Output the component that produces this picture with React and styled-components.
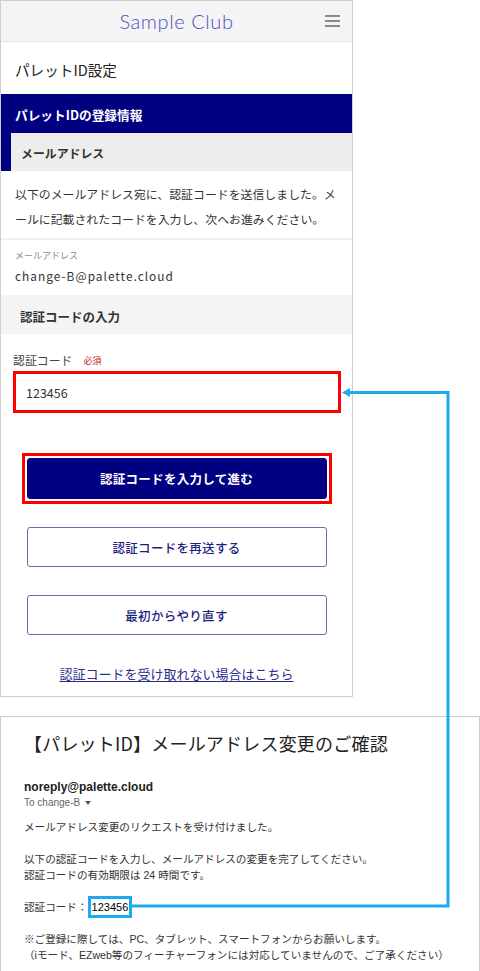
import React from 'react'
import styled, { createGlobalStyle } from 'styled-components'

const GlobalStyle = createGlobalStyle`
  html, body {
    margin: 0;
    padding: 0;
    background: #fff;
  }
  body {
    font-family: "Noto Sans CJK JP", "Noto Sans", sans-serif;
    color: #333;
  }
  * {
    box-sizing: border-box;
  }
`

const Page = styled.div`
  position: relative;
  width: 480px;
  height: 971px;
  overflow: hidden;
  display: flex;
  flex-direction: column;
  gap: 19px;
`

/* ---------- phone screen ---------- */

const Phone = styled.div`
  width: 353px;
  border: 1px solid #cfcfcf;
  display: flex;
  flex-direction: column;
`

const Header = styled.header`
  height: 41px;
  background: #f4f4f4;
  border-bottom: 1px solid #e6e6e6;
  display: grid;
  grid-template-columns: 1fr auto 1fr;
  align-items: center;
`

const Logo = styled.div`
  grid-column: 2;
  font-family: Lato, "Liberation Sans", sans-serif;
  font-weight: 300;
  font-size: 20px;
  letter-spacing: 0.6px;
  color: #4d4dbf;
`

const Burger = styled.div`
  justify-self: end;
  margin-right: 12px;
  width: 15px;
  display: flex;
  flex-direction: column;
  gap: 3.4px;

  span {
    display: block;
    height: 1.6px;
    background: #8a8a8a;
  }
`

const PageTitle = styled.h1`
  margin: 0;
  height: 52px;
  padding: 3px 14px 0;
  display: flex;
  align-items: center;
  font-size: 14.6px;
  font-weight: 400;
  color: #222;
`

const NavyBar = styled.h2`
  margin: 0;
  height: 39px;
  padding: 2px 14px 0;
  display: flex;
  align-items: center;
  background: #000080;
  color: #fff;
  font-size: 12.7px;
  font-weight: 700;
`

const SubHead = styled.h3`
  margin: 0;
  height: ${p => (p.$accent ? '38px' : '39px')};
  padding: ${p => (p.$accent ? '0 10px' : '3px 19px 0')};
  display: flex;
  align-items: center;
  background: ${p => (p.$accent ? '#ededed' : '#f4f4f4')};
  border-left: ${p => (p.$accent ? '10px solid #000080' : 'none')};
  font-size: ${p => (p.$accent ? '11.9px' : '12.5px')};
  font-weight: 700;
  color: #333;
`

const Lead = styled.p`
  margin: 0;
  padding: 10px 12px 7px 14px;
  font-size: 11.9px;
  line-height: 25px;
  color: #333;
`

const InfoBlock = styled.div`
  border-top: 2px solid #f0f0f0;
  padding: 9px 14px 9px;
  display: flex;
  flex-direction: column;
  gap: 3px;
`

const InfoLabel = styled.div`
  font-size: 9px;
  line-height: 14px;
  color: #8a8a8a;
`

const InfoValue = styled.div`
  font-size: 11.9px;
  line-height: 20px;
  letter-spacing: 1px;
  color: #333;
`

const FormBlock = styled.div`
  padding: 16px 12px 0;
`

const FieldLabel = styled.div`
  display: flex;
  align-items: center;
  gap: 11px;
  font-size: 11.9px;
  line-height: 18px;
  color: #444;
`

const Required = styled.span`
  font-size: 9px;
  color: #c0282d;
  padding-top: 2px;
`

const InputBox = styled.div`
  margin-top: 1px;
  width: 328px;
  height: 42px;
  border: 3px solid #ff0000;
  background: #fff;
  padding: 0 10px;
  display: flex;
  align-items: center;
  font-size: 12.5px;
  color: #333;
`

const Actions = styled.div`
  padding: 40px 0 13px;
  display: flex;
  flex-direction: column;
  align-items: center;
`

const Highlight = styled.div`
  border: 3px solid #ff0000;
  padding: 2px;
  margin-bottom: 23px;
`

const Button = styled.div`
  width: 300px;
  height: ${p => (p.$primary ? '41px' : '40px')};
  margin-bottom: ${p => (p.$primary ? '0' : '28px')};
  border-radius: 3px;
  display: flex;
  align-items: center;
  justify-content: center;
  font-size: 12.5px;
  letter-spacing: 0.3px;
  font-weight: ${p => (p.$primary ? 700 : 500)};
  background: ${p => (p.$primary ? '#000080' : '#fff')};
  color: ${p => (p.$primary ? '#fff' : '#1e1e80')};
  border: 1px solid ${p => (p.$primary ? '#000080' : '#6d6da6')};
`

const HelpLink = styled.a`
  margin-top: 2px;
  font-size: 13px;
  line-height: 18px;
  color: #2b2b8a;
  text-decoration: underline;
  text-underline-offset: 2px;
`

/* ---------- mail preview ---------- */

const Mail = styled.div`
  flex: 1;
  width: 480px;
  border: 1px solid #cccccc;
  border-bottom: none;
  padding: 13px 8px 0 23px;
  font-family: "Liberation Sans", "Noto Sans CJK JP", sans-serif;
  white-space: nowrap;
`

const MailSubject = styled.div`
  font-family: "Noto Sans CJK JP", sans-serif;
  font-size: 18px;
  line-height: 26px;
  color: #222;
  letter-spacing: 0.2px;
`

const Sender = styled.div`
  margin-top: 23px;
  font-size: 12px;
  line-height: 16px;
  font-weight: 700;
  color: #222;
`

const Recipient = styled.div`
  margin-top: 1px;
  font-size: 10px;
  line-height: 14px;
  color: #666;
  display: flex;
  align-items: center;
  gap: 5px;
`

const Caret = styled.span`
  width: 0;
  height: 0;
  border-left: 3.5px solid transparent;
  border-right: 3.5px solid transparent;
  border-top: 4px solid #555;
`

const MailBody = styled.div`
  margin-top: 9px;
`

const MailPara = styled.p`
  margin: 0 0 16px;
  font-size: 10.6px;
  line-height: 16px;
  color: #333;
`

const CodeBox = styled.span`
  border: 3px solid #1eaaf1;
  padding: 2px 1px;
  font-size: 11px;
  color: #000;
`

const Overlay = styled.svg`
  position: absolute;
  top: 0;
  left: 0;
  pointer-events: none;
`

const App = () => {
  return (
    <Page>
      <GlobalStyle />
      <Phone>
        <Header>
          <Logo>Sample Club</Logo>
          <Burger>
            <span />
            <span />
            <span />
          </Burger>
        </Header>

        <PageTitle>パレットID設定</PageTitle>
        <NavyBar>パレットIDの登録情報</NavyBar>
        <SubHead $accent>メールアドレス</SubHead>

        <Lead>
          以下のメールアドレス宛に、認証コードを送信しました。メールに記載されたコードを入力し、次へお進みください。
        </Lead>

        <InfoBlock>
          <InfoLabel>メールアドレス</InfoLabel>
          <InfoValue>change-B@palette.cloud</InfoValue>
        </InfoBlock>

        <SubHead>認証コードの入力</SubHead>

        <FormBlock>
          <FieldLabel>
            認証コード
            <Required>必須</Required>
          </FieldLabel>
          <InputBox>123456</InputBox>
        </FormBlock>

        <Actions>
          <Highlight>
            <Button $primary>認証コードを入力して進む</Button>
          </Highlight>
          <Button>認証コードを再送する</Button>
          <Button>最初からやり直す</Button>
          <HelpLink>認証コードを受け取れない場合はこちら</HelpLink>
        </Actions>
      </Phone>

      <Mail>
        <MailSubject>【パレットID】メールアドレス変更のご確認</MailSubject>
        <Sender>noreply@palette.cloud</Sender>
        <Recipient>
          To change-B
          <Caret />
        </Recipient>
        <MailBody>
          <MailPara>メールアドレス変更のリクエストを受け付けました。</MailPara>
          <MailPara>
            以下の認証コードを入力し、メールアドレスの変更を完了してください。
            <br />
            認証コードの有効期限は 24 時間です。
          </MailPara>
          <MailPara>
            認証コード：<CodeBox>123456</CodeBox>
          </MailPara>
          <MailPara>
            ※ご登録に際しては、PC、タブレット、スマートフォンからお願いします。
            <br />
            （iモード、EZweb等のフィーチャーフォンには対応していませんので、ご了承ください）
          </MailPara>
        </MailBody>
      </Mail>

      <Overlay width="480" height="971" viewBox="0 0 480 971">
        <polyline
          points="129,906 448,906 448,392.5 349,392.5"
          fill="none"
          stroke="#1eaaf1"
          strokeWidth="3"
        />
        <polygon points="342,392.5 350,388 350,397" fill="#1eaaf1" />
      </Overlay>
    </Page>
  )
}

export default App
